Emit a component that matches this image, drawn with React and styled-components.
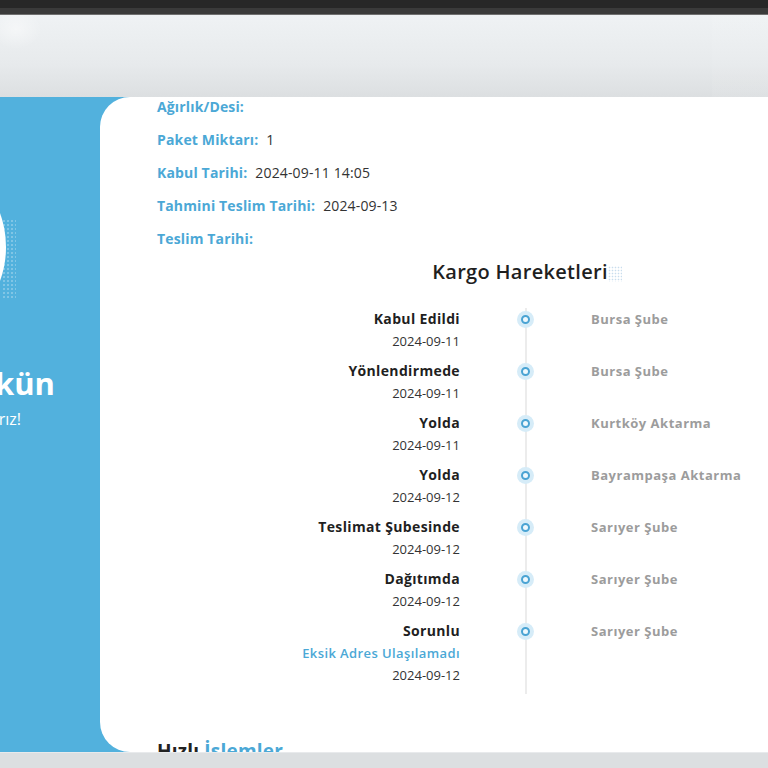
import React from "react";
import styled, { createGlobalStyle } from "styled-components";

const GlobalStyle = createGlobalStyle`
  html, body {
    margin: 0;
    padding: 0;
  }
  body {
    font-family: "Open Sans", "Liberation Sans", sans-serif;
    background: #dcdfe1;
  }
`;

const Screen = styled.div`
  width: 768px;
  height: 768px;
  display: flex;
  flex-direction: column;
  overflow: hidden;
`;

const TopBar = styled.div`
  height: 14px;
  flex-shrink: 0;
  background: linear-gradient(#272727 0 8px, #3a3a3a 8px 14px);
  border-bottom: 1px solid #6f6f6f;
`;

const Header = styled.header`
  height: 82px;
  flex-shrink: 0;
  background:
    radial-gradient(ellipse 26px 20px at 16px 14px, rgba(255, 255, 255, 0.45), transparent),
    linear-gradient(90deg, transparent 0 712px, rgba(255, 255, 255, 0.06) 712px),
    linear-gradient(180deg, #eff2f4 0%, #e7eaec 60%, #dcdfe1 100%);
`;

const Main = styled.main`
  flex: 1;
  display: flex;
  background: #52b1dd;
  overflow: hidden;
`;

const Side = styled.aside`
  position: relative;
  width: 100px;
  flex-shrink: 0;
  display: flex;
  flex-direction: column;
  align-items: flex-end;
  padding-top: 264px;
  overflow: hidden;
  color: #fff;
`;

const Bubble = styled.div`
  position: absolute;
  top: 50px;
  left: -194px;
  width: 200px;
  height: 200px;
  border-radius: 50%;
  background: #fff;
`;

const DotGrid = styled.div`
  position: absolute;
  top: 122px;
  left: 2px;
  width: 14px;
  height: 80px;
  background-image: radial-gradient(circle, rgba(255, 255, 255, 0.28) 0.7px, transparent 1.1px);
  background-size: 4px 4px;
`;

const HeroTitle = styled.h1`
  margin: 0 ${(p) => p.$end}px 0 0;
  white-space: nowrap;
  font-size: 31px;
  line-height: 44px;
  font-weight: 700;
`;

const HeroText = styled.p`
  margin: 0 ${(p) => p.$end}px 0 0;
  white-space: nowrap;
  font-size: 16px;
  line-height: 28px;
`;

const Card = styled.section`
  flex: 1;
  min-width: 0;
  background: #fff;
  border-radius: 30px 0 0 30px;
  padding-left: 57px;
`;

const InfoRow = styled.div`
  display: flex;
  gap: 8px;
  font-size: 14px;
  line-height: 20px;
  margin-bottom: 13px;
  letter-spacing: 0.15px;
`;

const InfoLabel = styled.span`
  color: #4ba8d6;
  font-weight: 700;
`;

const InfoValue = styled.span`
  color: #333;
`;

const Movements = styled.div`
  width: 726px;
`;

const SectionTitle = styled.h2`
  margin: -4px 0 22px;
  text-align: center;
  font-size: 20px;
  line-height: 28px;
  font-weight: 600;
  letter-spacing: 0.3px;
  color: #1f1f1f;
`;

const Dotted = styled.span`
  position: relative;
  &::after {
    content: "";
    position: absolute;
    right: -14px;
    top: 8px;
    width: 14px;
    height: 16px;
    background-image: radial-gradient(circle, rgba(120, 170, 210, 0.4) 0.7px, transparent 1.1px);
    background-size: 3px 3px;
  }
`;

const Timeline = styled.div`
  display: grid;
  grid-template-columns: 303px 131px 292px;
`;

const EventInfo = styled.div`
  text-align: right;
  padding-bottom: 8px;
`;

const EventTitle = styled.div`
  font-size: 14px;
  line-height: 22px;
  font-weight: 700;
  letter-spacing: 0.35px;
  color: #1f1f1f;
`;

const EventNote = styled.div`
  font-size: 13px;
  line-height: 22px;
  font-weight: 600;
  letter-spacing: 0.4px;
  color: #4ba8d6;
`;

const EventDate = styled.div`
  font-size: 13px;
  line-height: 22px;
  color: #333;
`;

const Track = styled.div`
  display: flex;
  justify-content: center;
  padding-top: 3px;
  background: linear-gradient(#ececec, #ececec) center / 2px 100% no-repeat;
`;

const Marker = styled.span`
  width: 17px;
  height: 17px;
  border-radius: 50%;
  background: #d6ecf8;
  display: flex;
  align-items: center;
  justify-content: center;
  &::before {
    content: "";
    width: 5px;
    height: 5px;
    border-radius: 50%;
    border: 2px solid #4aa3d3;
    background: #eef8fd;
  }
`;

const Place = styled.div`
  font-size: 13px;
  line-height: 22px;
  font-weight: 700;
  letter-spacing: 0.5px;
  color: #9c9c9c;
`;

const QuickTitle = styled.h3`
  margin: 44px 0 0;
  font-size: 19px;
  line-height: 26px;
  font-weight: 700;
  letter-spacing: 0.2px;
  color: #222;
  span {
    color: #4ba8d6;
  }
`;

const BottomBar = styled.footer`
  height: 15px;
  flex-shrink: 0;
  background: #dcdfe1;
  border-top: 1px solid #e8eaec;
`;

const info = [
  { label: "Ağırlık/Desi:", value: "" },
  { label: "Paket Miktarı:", value: "1" },
  { label: "Kabul Tarihi:", value: "2024-09-11 14:05" },
  { label: "Tahmini Teslim Tarihi:", value: "2024-09-13" },
  { label: "Teslim Tarihi:", value: "" },
];

const events = [
  { title: "Kabul Edildi", date: "2024-09-11", place: "Bursa Şube" },
  { title: "Yönlendirmede", date: "2024-09-11", place: "Bursa Şube" },
  { title: "Yolda", date: "2024-09-11", place: "Kurtköy Aktarma" },
  { title: "Yolda", date: "2024-09-12", place: "Bayrampaşa Aktarma" },
  { title: "Teslimat Şubesinde", date: "2024-09-12", place: "Sarıyer Şube" },
  { title: "Dağıtımda", date: "2024-09-12", place: "Sarıyer Şube" },
  { title: "Sorunlu", note: "Eksik Adres Ulaşılamadı", date: "2024-09-12", place: "Sarıyer Şube" },
];

export default function App() {
  return (
    <>
      <GlobalStyle />
      <Screen>
        <TopBar />
        <Header />
        <Main>
          <Side>
            <Bubble />
            <DotGrid />
            <HeroTitle $end={45}>Kargonuzu takip etmek artık mümkün</HeroTitle>
            <HeroText $end={79}>Her an yanınızda olmaya hazırız!</HeroText>
          </Side>
          <Card>
            {info.map((row) => (
              <InfoRow key={row.label}>
                <InfoLabel>{row.label}</InfoLabel>
                {row.value && <InfoValue>{row.value}</InfoValue>}
              </InfoRow>
            ))}
            <Movements>
              <SectionTitle>
                <Dotted>Kargo Hareketleri</Dotted>
              </SectionTitle>
              <Timeline>
                {events.map((ev, i) => (
                  <React.Fragment key={i}>
                    <EventInfo>
                      <EventTitle>{ev.title}</EventTitle>
                      {ev.note && <EventNote>{ev.note}</EventNote>}
                      <EventDate>{ev.date}</EventDate>
                    </EventInfo>
                    <Track>
                      <Marker />
                    </Track>
                    <Place>{ev.place}</Place>
                  </React.Fragment>
                ))}
              </Timeline>
            </Movements>
            <QuickTitle>
              Hızlı <span>İşlemler</span>
            </QuickTitle>
          </Card>
        </Main>
        <BottomBar />
      </Screen>
    </>
  );
}
